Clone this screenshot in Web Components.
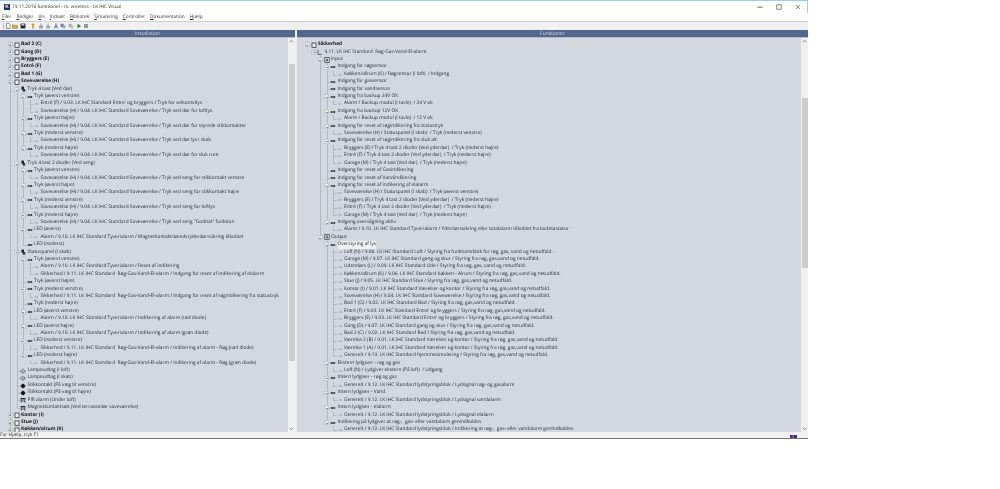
<!DOCTYPE html>
<html lang="da">
<head>
<meta charset="utf-8">
<title>LK IHC Visual</title>
<style>
    html, body { margin: 0; background: #fff; }
</style>
</head>
<body>
<lk-window>
    <lk-titlebar slot="title">19.11.2016 funktionel - m. wireless - LK IHC Visual</lk-titlebar>
    <lk-menubar slot="menu"></lk-menubar>
    <lk-toolbar slot="tools"></lk-toolbar>
    <lk-pane slot="left" tree="installation" thumb-top="26" thumb-height="297" style="width:295px">Installation</lk-pane>
    <lk-pane slot="right" tree="funktioner" thumb-top="60" thumb-height="170" style="flex:1">Funktioner</lk-pane>
    <lk-statusbar slot="status">For Hjælp, tryk F1</lk-statusbar>
</lk-window>

<script>
const FONT = '"Open Sans", "Liberation Sans", sans-serif';

// icons for the tree, 6x6 box
const ICONS = {
    room: '<rect x="1" y="1" width="4" height="4.6" fill="#eef0f3" stroke="#222" stroke-width=".7"/>',
    device: '<rect x="1.4" y=".6" width="2.6" height="3" fill="#222"/><rect x="2.6" y="3" width="2.6" height="2.6" fill="#333"/>',
    input: '<path d="M.4 3H4.6" stroke="#111" stroke-width=".6"/><path d="M3.6 1.7L5.6 3L3.6 4.3z" fill="#111"/><circle cx="1.8" cy="3" r=".8" fill="#111"/>',
    output: '<path d="M1.4 3H5.6" stroke="#111" stroke-width=".6"/><path d="M2.4 1.7L.4 3L2.4 4.3z" fill="#111"/><circle cx="4" cy="3" r=".8" fill="#111"/>',
    leafin: '<path d="M1.4 3H4.6" stroke="#8b929c" stroke-width=".6"/><path d="M3.6 2L4.8 3L3.6 4" fill="none" stroke="#8b929c" stroke-width=".5"/>',
    leafout: '<path d="M1.8 3H4.8" stroke="#8b929c" stroke-width=".6"/><path d="M2.6 2L1.4 3L2.6 4" fill="none" stroke="#8b929c" stroke-width=".5"/>',
    lamp: '<path d="M3 1L5.6 3.2H.4z" fill="#dfe2e6" stroke="#333" stroke-width=".5"/><path d="M1.8 3.6V5H4.2V3.6" fill="none" stroke="#333" stroke-width=".5"/>',
    socket: '<circle cx="3" cy="3" r="2" fill="#111"/><path d="M.2 3H5.8M3 .4V5.6" stroke="#111" stroke-width=".6"/>',
    pir: '<path d="M.6 1H5.4V2.4H.6z" fill="#222"/><path d="M1.2 2.4V5.6M4.8 2.4V5.6M1.2 4H4.8" stroke="#222" stroke-width=".7"/>',
    block: '<path d="M1 .8V5.4H5" fill="none" stroke="#333" stroke-width=".7"/>',
    group: '<rect x=".8" y=".6" width="4.4" height="4.8" fill="#e8eaee" stroke="#222" stroke-width=".6"/><path d="M1.8 2.2H4.2M1.8 3.8H4.2" stroke="#111" stroke-width=".8"/>'
};

const trees = {};
const sov = "Soveværelse (H) / 9.04. LK IHC Standard Soveværelse / ";
const sik = "Sikkerhed / 9.11. LK IHC Standard  Røg-Gas-Vand-El-alarm / ";
const tyv = "Alarm / 9.10. LK IHC Standard Tyverialarm / ";

// level|icon|text  (a trailing + on the icon means a collapsed node)
trees.installation = `
0|room+|Bad 2 (C)
0|room+|Gang (D)
0|room+|Bryggers (E)
0|room+|Entré (F)
0|room+|Bad 1 (G)
0|room|Soveværelse (H)
1|device|Tryk 4 tast (Ved dør)
2|input|Tryk (øverst venstre)
3|leafin|Entré (F) / 9.03. LK IHC Standard Entre' og bryggers / Tryk for velkomstlys
3|leafin|${sov}Tryk ved dør for loftlys
2|input|Tryk (øverst højre)
3|leafin|${sov}Tryk ved dør for styrede stikkontakter
2|input|Tryk (nederst venstre)
3|leafin|${sov}Tryk ved dør lys i skab
2|input|Tryk (nederst højre)
3|leafin|${sov}Tryk ved dør for sluk rum
1|device|Tryk 4 tast 2 dioder (Ved seng)
2|input|Tryk (øverst venstre)
3|leafin|${sov}Tryk ved seng for stikkontakt venstre
2|input|Tryk (øverst højre)
3|leafin|${sov}Tryk ved seng for stikkontakt højre
2|input|Tryk (nederst venstre)
3|leafin|${sov}Tryk ved seng for loftlys
2|input|Tryk (nederst højre)
3|leafin|${sov}Tryk ved seng "Godnat" funktion
2|output|LED (øverst)
3|leafout|${tyv}Magnetkontaktdøreds/yderdørssikring tilkoblet
2|output|LED (nederst)
1|device|Statuspanel (I skab)
2|input|Tryk (øverst venstre)
3|leafin|${tyv}Reset af indikering
3|leafin|${sik}Indgang for reset af indikering af elalarm
2|input|Tryk (øverst højre)
2|input|Tryk (nederst venstre)
3|leafin|${sik}Indgang for reset af røgindikering fra statustryk
2|input|Tryk (nederst højre)
2|output|LED (øverst venstre)
3|leafout|${tyv}Indikering af alarm (rød diode)
2|output|LED (øverst højre)
3|leafout|${tyv}Indikering af alarm (grøn diode)
2|output|LED (nederst venstre)
3|leafout|${sik}Indikering af alarm - Røg (rød diode)
2|output|LED (nederst højre)
3|leafout|${sik}Indikering af alarm - Røg (grøn diode)
1|lamp|Lampeudtag (I loft)
1|lamp|Lampeudtag (I skab)
1|socket|Stikkontakt (På væg til venstre)
1|socket|Stikkontakt (På væg til højre)
1|pir|PIR alarm (Under loft)
1|pir|Magnetkontaktsæt (Ved terrassedør soveværelse)
0|room+|Kontor (I)
0|room+|Stue (J)
0|room+|Køkken/alrum (K)`;

const gvn = "Styring fra røg, gas,vand og netudfald.";
const lyd = "Generelt / 9.12. LK IHC Standard lydstyringsblok / ";
trees.funktioner = `
0|room|Sikkerhed
1|block|9.11. LK IHC Standard  Røg-Gas-Vand-El-alarm
2|group|Input
3|input|Indgang for røgsensor
4|leafout|Køkken/allrum (K) / Røgsensor (I loft)  / Indgang
3|input|Indgang for gassensor
3|input|Indgang for vandsensor
3|input|Indgang fra backup 24V OK
4|leafout|Alarm / Backup modul (I tavle)  / 24 V ok
3|input|Indgang fra backup 12V OK
4|leafout|Alarm / Backup modul (I tavle)  / 12 V ok
3|input|Indgang for reset af røgindikering fra statustryk
4|leafout|Soveværelse (H) / Statuspanel (I skab)  / Tryk (nederst venstre)
3|input|Indgang for reset af røgindikering fra sluk alt:
4|leafout|Bryggers (E) / Tryk 4 tast 2 dioder (Ved yderdør)  / Tryk (nederst højre)
4|leafout|Entré (F) / Tryk 4 tast 2 dioder (Ved yderdør)  / Tryk (nederst højre)
4|leafout|Garage (M) / Tryk 4 tast (Ved dør)  / Tryk (nederst højre)
3|input|Indgang for reset af Gasindikering
3|input|Indgang for reset af Vandindikering
3|input|Indgang for reset af indikering af elalarm
4|leafout|Soveværelse (H) / Statuspanel (I skab)  / Tryk (øverst venstre)
4|leafout|Bryggers (E) / Tryk 4 tast 2 dioder (Ved yderdør)  / Tryk (nederst højre)
4|leafout|Entré (F) / Tryk 4 tast 2 dioder (Ved yderdør)  / Tryk (nederst højre)
4|leafout|Garage (M) / Tryk 4 tast (Ved dør)  / Tryk (nederst højre)
3|input|Indgang overvågning aktiv
4|leafout|Alarm / 9.10. LK IHC Standard Tyverialarm / Yderdørssikring eller totalalarm tilkoblet fra kodetastatur
2|group|Output
3|output!|Overstyring af lys
4|leafin|Loft (N) / 9.08. LK IHC Standard Loft / Styring fra funktionsblok for røg, gas, vand og netudfald.
4|leafin|Garage (M) / 9.07. LK IHC Standard gang og skur / ${gvn}
4|leafin|Udendørs (L) / 9.09. LK IHC Standard Ude / Styring fra røg, gas, vand og netudfald.
4|leafin|Køkken/allrum (K) / 9.06. LK IHC Standard Køkken - Alrum / ${gvn}
4|leafin|Stue (J) / 9.05. LK IHC Standard Stue / ${gvn}
4|leafin|Kontor (I) / 9.01. LK IHC Standard Værelser og kontor / ${gvn}
4|leafin|Soveværelse (H) / 9.04. LK IHC Standard Soveværelse / ${gvn}
4|leafin|Bad 1 (G) / 9.02. LK IHC Standard Bad / ${gvn}
4|leafin|Entré (F) / 9.03. LK IHC Standard Entre' og bryggers / ${gvn}
4|leafin|Bryggers (E) / 9.03. LK IHC Standard Entre' og bryggers / ${gvn}
4|leafin|Gang (D) / 9.07. LK IHC Standard gang og skur / ${gvn}
4|leafin|Bad 2 (C) / 9.02. LK IHC Standard Bad / ${gvn}
4|leafin|Værelse 2 (B) / 9.01. LK IHC Standard Værelser og kontor / ${gvn}
4|leafin|Værelse 1 (A) / 9.01. LK IHC Standard Værelser og kontor / ${gvn}
4|leafin|Generelt / 9.13. LK IHC Standard hjemmesimulering / ${gvn}
3|output|Ekstern lydgiver - røg og gas
4|leafin|Loft (N) / Lydgiver ekstern (På loft)  / Udgang
3|output|Intern lydgiver - røg og gas
4|leafin|${lyd}Lydsignal røg- og gasalarm
3|output|Intern lydgiver - Vand
4|leafin|${lyd}Lydsignal vandalarm
3|output|Intern lydgiver - elalarm
4|leafin|${lyd}Lydsignal elalarm
3|output|Indikering på lydgiver at røg-,  gas- eller vandalarm genindkobles
4|leafin|${lyd}Indikering at røg-,  gas- eller vandalarm genindkobles`;

class LkWindow extends HTMLElement {
    constructor() {
        super();
        this.attachShadow({ mode: "open" });
        this.shadowRoot.innerHTML = `
            <style>
                :host {
                    display: flex; flex-direction: column;
                    width: 808px; height: 439px; box-sizing: border-box;
                    background: #f0f0f0; border-top: 1px solid #9ccbf0;
                    font-family: ${FONT}; color: #222;
                    text-rendering: geometricPrecision;
                    filter: blur(.35px);
                }
                .panes { flex: 1; min-height: 0; display: flex; gap: 2px; }
            </style>
            <slot name="title"></slot>
            <slot name="menu"></slot>
            <slot name="tools"></slot>
            <div class="panes">
                <slot name="left"></slot>
                <slot name="right"></slot>
            </div>
            <slot name="status"></slot>`;
    }
}

class LkTitlebar extends HTMLElement {
    constructor() {
        super();
        this.attachShadow({ mode: "open" });
        this.shadowRoot.innerHTML = `
            <style>
                :host {
                    display: flex; align-items: center; height: 12px; flex: none;
                    background: #fff; font-size: 4.75px; color: #333;
                    border-right: 1px solid #9ccbf0;
                }
                .logo {
                    width: 6px; height: 6px; margin: 0 2px 0 4px; background: #1f2f6e;
                    color: #fff; font: bold 5px/6px "Liberation Sans", sans-serif; text-align: center;
                }
                .text { flex: 1; }
                .btn { width: 19px; display: flex; justify-content: center; }
                svg { width: 6px; height: 6px; }
            </style>
            <div class="logo">K</div>
            <div class="text"><slot></slot></div>
            <div class="btn"><svg viewBox="0 0 6 6"><path d="M.5 3.2H5.5" stroke="#666"/></svg></div>
            <div class="btn"><svg viewBox="0 0 6 6"><rect x=".8" y=".8" width="4.4" height="4.4" fill="none" stroke="#555" stroke-width=".7"/></svg></div>
            <div class="btn"><svg viewBox="0 0 6 6"><path d="M1 1L5 5M5 1L1 5" stroke="#666" stroke-width=".7"/></svg></div>`;
    }
}

class LkMenubar extends HTMLElement {
    constructor() {
        super();
        this.attachShadow({ mode: "open" });
        const items = ["Filer", "Rediger", "Vis", "Indsæt", "Bibliotek", "Simulering", "Controller", "Dokumentation", "Hjælp"];
        this.shadowRoot.innerHTML = `
            <style>
                :host {
                    display: flex; align-items: center; gap: 5px; box-sizing: border-box; flex: none;
                    height: 9px; padding: 0 2px; background: #fff; font-size: 4.75px; color: #333;
                    border-bottom: 1px solid #cfcfcf;
                }
            </style>
            ${items.map(i => `<span><u>${i[0]}</u>${i.slice(1)}</span>`).join("")}`;
    }
}

class LkToolbar extends HTMLElement {
    constructor() {
        super();
        this.attachShadow({ mode: "open" });
        const icons = [
            '<path d="M1.5 .5H4L5 1.5V5.5H1.5z" fill="#fff" stroke="#555" stroke-width=".6"/>',
            '<path d="M.4 2H2.4L3 2.6H5.4V5.2H.4z" fill="#e0b93c" stroke="#6b5a1c" stroke-width=".5"/>',
            '<rect x=".6" y=".6" width="4.8" height="4.8" fill="#223"/><rect x="1.6" y=".8" width="2.8" height="1.8" fill="#ccd"/>',
            null,
            '<circle cx="3" cy="1.8" r="1.4" fill="#c9a21f"/><path d="M3 3V5.6" stroke="#8a7414" stroke-width="1"/>',
            '<path d="M2.4 .6H3.6V2.6H5V5.4H1V2.6H2.4z" fill="#a4a7ab"/>',
            '<path d="M2.4 .6H3.6V2.6H5V5.4H1V2.6H2.4z" fill="#a9acb0"/>',
            '<path d="M1.4 5.4L3 2.6M4.6 5.4L3 2.6M3 .6V2.6" stroke="#3b4f96" stroke-width=".9"/>',
            '<rect x=".6" y=".8" width="3" height="3.2" fill="#6d78b5"/><rect x="2.4" y="2.2" width="3" height="3.2" fill="#98a0cc"/>',
            '<rect x=".6" y=".8" width="3" height="3.2" fill="#a4a7ab"/><rect x="2.4" y="2.2" width="3" height="3.2" fill="#bcbec2"/>',
            '<path d="M1.5 .8L5 3L1.5 5.2z" fill="#1a8a2e"/>',
            '<rect x="1" y="1" width="4" height="4" fill="#9b9b9b"/>'
        ];
        this.shadowRoot.innerHTML = `
            <style>
                :host {
                    display: flex; align-items: center; height: 8px; flex: none; padding-left: 2.5px;
                    background: #f0f0f0;
                }
                .grip { width: 1px; height: 6px; background: #bbb; margin-right: .5px; }
                .ic { width: 7.6px; display: flex; justify-content: center; }
                .sep { width: 2.4px; }
                svg { width: 6px; height: 6px; }
            </style>
            <div class="grip"></div>
            ${icons.map(i => i
                ? `<div class="ic"><svg viewBox="0 0 6 6">${i}</svg></div>`
                : '<div class="sep"></div>').join("")}`;
    }
}

// one row of a tree. Cells before the node are indent guides, given in "guides" as 1/0 per level
class LkRow extends HTMLElement {
    constructor() {
        super();
        this.attachShadow({ mode: "open" });
    }
    connectedCallback() {
        const guides = (this.getAttribute("guides") || "").split("").map(g => g === "1");
        const icon = this.getAttribute("icon");
        const box = this.getAttribute("box");
        const more = this.hasAttribute("more");
        const bold = this.hasAttribute("bold");
        const mark = this.hasAttribute("mark");
        this.shadowRoot.innerHTML = `
            <style>
                :host { display: flex; align-items: center; height: 7.42px; font-size: 4.8px; line-height: 7.42px; white-space: pre; color: #2a2d33; }
                .cell { position: relative; width: 6.5px; height: 100%; flex: none; }
                .v { position: absolute; left: 3px; top: 0; bottom: 0; width: .6px; background: #b3b9c3; }
                .v.half { bottom: 50%; }
                .h { position: absolute; left: 3px; right: 0; top: 50%; height: .6px; background: #b3b9c3; }
                .box {
                    position: absolute; left: .9px; top: 1.3px; width: 4.8px; height: 4.8px; box-sizing: border-box;
                    background: #e3e6eb; border: .5px solid #c3c8cf;
                }
                .box::before { content: ""; position: absolute; left: .6px; right: .6px; top: 1.6px; height: .6px; background: #8d929a; }
                .box.plus::after { content: ""; position: absolute; top: .6px; bottom: .6px; left: 1.6px; width: .6px; background: #8d929a; }
                svg { width: 6px; height: 6px; flex: none; }
                .label { margin-left: 1.5px; }
                .bold { font-weight: 700; color: #111; }
                .mark { background: #eef0f3; }
            </style>
            ${guides.map(g => `<div class="cell">${g ? '<div class="v"></div>' : ""}</div>`).join("")}
            <div class="cell">
                <div class="v ${more ? "" : "half"}"></div>
                <div class="h"></div>
                ${box ? `<div class="box ${box === "plus" ? "plus" : ""}"></div>` : ""}
            </div>
            <svg viewBox="0 0 6 6">${ICONS[icon] || ""}</svg>
            <span class="label ${bold ? "bold" : ""} ${mark ? "mark" : ""}"><slot></slot></span>`;
    }
}

class LkTree extends HTMLElement {
    constructor() {
        super();
        this.attachShadow({ mode: "open" });
        this.shadowRoot.innerHTML = `
            <style>
                :host {
                    display: block; flex: 1; min-width: 0; overflow: hidden;
                    padding: 3.2px 0 0 7px; background: #d2d7e0;
                }
            </style>
            <slot></slot>`;
    }
    connectedCallback() {
        const rows = trees[this.getAttribute("name")].trim().split("\n").map(l => {
            const [level, icon, ...text] = l.split("|");
            return { level: +level, icon, text: text.join("|") };
        });
        // does a later sibling exist at this level, before the parent closes
        const hasNext = (i, lvl) => {
            for (let j = i + 1; j < rows.length; j++) {
                if (rows[j].level === lvl) return true;
                if (rows[j].level < lvl) return false;
            }
            return false;
        };
        rows.forEach((r, i) => {
            const el = document.createElement("lk-row");
            let guides = "";
            for (let a = 0; a < r.level; a++) guides += hasNext(i, a) ? "1" : "0";
            const open = rows[i + 1] && rows[i + 1].level > r.level;
            const plus = r.icon.endsWith("+");
            const mark = r.icon.endsWith("!");
            const icon = r.icon.replace(/[+!]$/, "");
            el.setAttribute("guides", guides);
            el.setAttribute("icon", icon);
            if (plus) el.setAttribute("box", "plus");
            else if (open) el.setAttribute("box", "minus");
            if (hasNext(i, r.level)) el.setAttribute("more", "");
            if (icon === "room") el.setAttribute("bold", "");
            if (mark) el.setAttribute("mark", "");
            el.textContent = r.text;
            this.appendChild(el);
        });
    }
}

class LkScrollbar extends HTMLElement {
    constructor() {
        super();
        this.attachShadow({ mode: "open" });
    }
    connectedCallback() {
        const top = this.getAttribute("thumb-top");
        const height = this.getAttribute("thumb-height");
        this.shadowRoot.innerHTML = `
            <style>
                :host { display: flex; flex-direction: column; width: 7px; flex: none; background: #f0f0f0; }
                svg { width: 7px; height: 6px; flex: none; }
                .track { flex: 1; padding-top: ${top - 6}px; }
                .thumb { height: ${height}px; margin-left: .5px; background: #cdcdcd; }
            </style>
            <svg viewBox="0 0 7 6"><path d="M1.8 4L3.5 2.4L5.2 4" fill="none" stroke="#666" stroke-width=".8"/></svg>
            <div class="track"><div class="thumb"></div></div>
            <svg viewBox="0 0 7 6"><path d="M1.8 2L3.5 3.6L5.2 2" fill="none" stroke="#666" stroke-width=".8"/></svg>`;
    }
}

class LkPane extends HTMLElement {
    constructor() {
        super();
        this.attachShadow({ mode: "open" });
    }
    connectedCallback() {
        this.shadowRoot.innerHTML = `
            <style>
                :host { display: flex; flex-direction: column; min-width: 0; }
                .head {
                    height: 7px; flex: none; background: #52668f; color: #d9dee8;
                    font-size: 4.9px; line-height: 8px; text-align: center;
                    border-bottom: 1.4px solid #b9bcc2;
                }
                .body { flex: 1; min-height: 0; display: flex; }
            </style>
            <div class="head"><slot></slot></div>
            <div class="body">
                <lk-tree name="${this.getAttribute("tree")}"></lk-tree>
                <lk-scrollbar thumb-top="${this.getAttribute("thumb-top")}" thumb-height="${this.getAttribute("thumb-height")}"></lk-scrollbar>
            </div>`;
    }
}

class LkStatusbar extends HTMLElement {
    constructor() {
        super();
        this.attachShadow({ mode: "open" });
        this.shadowRoot.innerHTML = `
            <style>
                :host {
                    display: flex; align-items: center; height: 6px; flex: none;
                    background: #f0f0f0; font-size: 4.75px; line-height: 8px; color: #333;
                    border-bottom: 1px solid #777;
                }
                .text { flex: 1; }
                .ind { width: 7px; height: 3px; margin: 2px 11px 0 0; background: linear-gradient(90deg, #2b35b0 0 30%, #c7323c 30% 55%, #2b35b0 55%); }
            </style>
            <div class="text"><slot></slot></div>
            <div class="ind"></div>`;
    }
}

customElements.define("lk-window", LkWindow);
customElements.define("lk-titlebar", LkTitlebar);
customElements.define("lk-menubar", LkMenubar);
customElements.define("lk-toolbar", LkToolbar);
customElements.define("lk-row", LkRow);
customElements.define("lk-tree", LkTree);
customElements.define("lk-scrollbar", LkScrollbar);
customElements.define("lk-pane", LkPane);
customElements.define("lk-statusbar", LkStatusbar);
</script>
</body>
</html>
